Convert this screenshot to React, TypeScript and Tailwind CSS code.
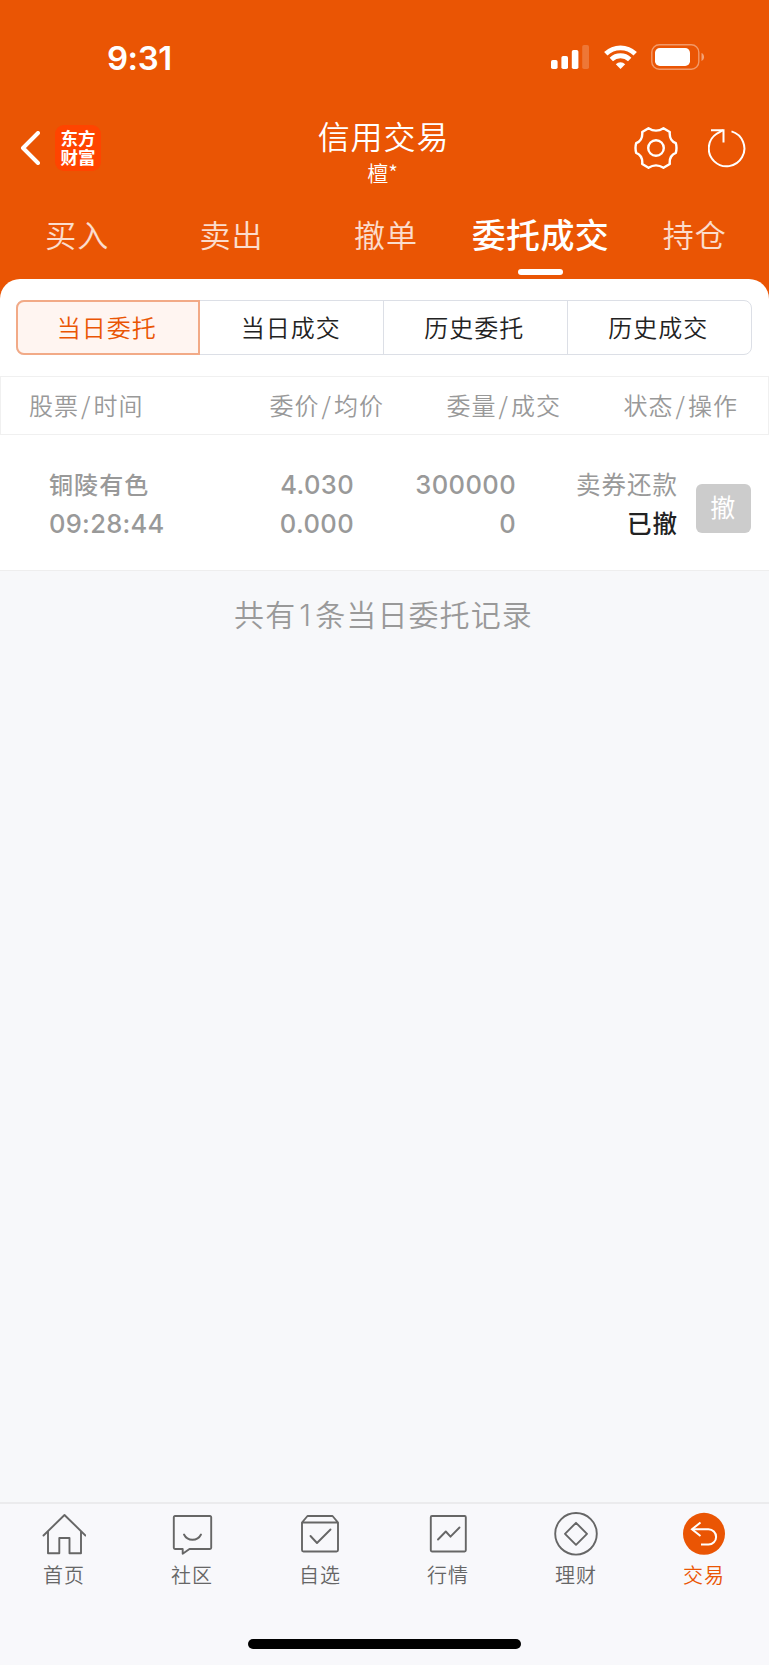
import { useState } from 'react'
import type { ReactNode } from 'react'
import clsx from 'clsx'

const TABS = ['买入', '卖出', '撤单', '委托成交', '持仓']
const SEGMENTS = ['当日委托', '当日成交', '历史委托', '历史成交']

const ORDERS = [
  {
    name: '铜陵有色',
    time: '09:28:44',
    price: '4.030',
    avgPrice: '0.000',
    amount: '300000',
    filled: '0',
    side: '卖券还款',
    status: '已撤',
  },
]

function StatusBar() {
  return (
    <div className="flex h-[114px] items-center justify-between pl-[107px] pr-[64px]">
      <span className="pt-[2px] font-['Inter','Liberation_Sans',sans-serif] text-[33px] font-semibold leading-none tracking-[-0.5px]">
        9:31
      </span>
      <div className="flex items-center gap-[14.5px]">
        <svg width="38" height="24" viewBox="0 0 38 24" fill="currentColor">
          <rect x="0" y="15" width="6.6" height="9" rx="1.8" />
          <rect x="10.4" y="11" width="6.6" height="13" rx="1.8" />
          <rect x="20.8" y="5" width="6.6" height="19" rx="1.8" />
          <rect x="31.2" y="0" width="6.8" height="24" rx="1.8" opacity="0.2" />
        </svg>
        <svg width="33" height="24" viewBox="0 0 33 24" fill="none" stroke="currentColor" strokeWidth="4.8">
          <path d="M1.8 8.8a21 21 0 0 1 29.4 0" />
          <path d="M7.3 14.5a13.2 13.2 0 0 1 18.4 0" />
          <path d="M16.5 24l-4.7-4.8a6.8 6.8 0 0 1 9.4 0z" fill="currentColor" stroke="none" />
        </svg>
        <svg width="54" height="26" viewBox="0 0 54 26" fill="currentColor">
          <rect x="0.8" y="0.8" width="47" height="24.4" rx="7.5" fill="none" stroke="currentColor" strokeWidth="1.4" opacity="0.4" />
          <rect x="4" y="4" width="35" height="18" rx="4.8" />
          <path d="M50.5 9v8c1.5-.6 2.6-2.2 2.6-4s-1.1-3.4-2.6-4z" opacity="0.45" />
        </svg>
      </div>
    </div>
  )
}

function TitleBar() {
  return (
    <div className="grid h-[82px] grid-cols-3 items-start">
      <div className="flex items-center gap-[15px] pl-5 pt-[11px]">
        <svg width="20" height="34" viewBox="0 0 20 34" fill="none" stroke="currentColor" strokeWidth="4" strokeLinecap="round" strokeLinejoin="round">
          <path d="M18 2L3 17l15 15" />
        </svg>
        <div className="h-[46px] w-[46px] rounded-[9px] bg-[#ff4400] pt-[3px] text-center text-[17.5px] font-bold leading-[19px]">
          东方
          <br />
          财富
        </div>
      </div>
      <div className="flex flex-col items-center pr-[2px]">
        <h1 className="text-[32px] font-[350] leading-[42px] tracking-[0.9px]">信用交易</h1>
        <span className="mt-px pr-[2px] text-[21px] font-[350] leading-[30px]">檀*</span>
      </div>
      <div className="flex items-center justify-end gap-[30px] pr-[22px] pt-3">
        <svg width="44" height="44" viewBox="0 0 44 44" fill="none" stroke="currentColor" strokeWidth="2.4" strokeLinejoin="round">
          <path d="M14.5 2.2Q22 7 29.5 2.2L35.8 6Q35 14.5 41.8 17.2Q43.2 22 41.8 26.8Q35 29.5 35.8 38L29.5 41.8Q22 37 14.5 41.8L8.2 38Q9 29.5 2.2 26.8Q0.8 22 2.2 17.2Q9 14.500 8.2 6Z" />
          <circle cx="22" cy="22" r="7.8" />
        </svg>
        <svg width="39" height="40" viewBox="0 0 39 40" fill="none" stroke="currentColor" strokeWidth="2">
          <path d="M23.5 3.4A17.8 17.8 0 1 1 9 5.5L15 2.2" />
          <path d="M3 2.2h12.5v12.3" />
        </svg>
      </div>
    </div>
  )
}

interface NavItemProps {
  label: string
  active?: boolean
  children: ReactNode
}

function NavItem({ label, active, children }: NavItemProps) {
  return (
    <button className={clsx('flex flex-1 flex-col items-center', active ? 'text-[#ea5504]' : 'text-[#666]')}>
      <svg width="44" height="44" viewBox="0 0 44 44" fill="none" stroke="currentColor" strokeWidth="1.9" strokeLinecap="round" strokeLinejoin="round">
        {children}
      </svg>
      <span className="mt-[5px] text-[20px] font-[350] leading-7 tracking-[1px]">{label}</span>
    </button>
  )
}

function BottomNav() {
  return (
    <nav className="flex h-[163px] flex-col border-t-2 border-[#ebebed] bg-[#f8f8fb]">
      <div className="flex pr-px pt-2">
        <NavItem label="首页">
          <path d="M1.5 23.5L22.5 3l21 20.5" />
          <path d="M6 20v21.3h11.3V26h10.2v15.3H39V20" />
        </NavItem>
        <NavItem label="社区">
          <path d="M5 4h35a1.2 1.2 0 0 1 1.2 1.2v30.6A1.2 1.2 0 0 1 40 37H19.5l-6.8 4.8V37H5a1.2 1.2 0 0 1-1.2-1.2V5.2A1.2 1.2 0 0 1 5 4z" />
          <path d="M14 22.5c3.5 7 13.5 7 17 0" />
        </NavItem>
        <NavItem label="自选">
          <path d="M4 10.5L9.5 4h25l5.5 6.5V38a1.5 1.5 0 0 1-1.5 1.5h-33A1.5 1.5 0 0 1 4 38zM4 10.5h36" />
          <path d="M12.5 24l6.5 7L32.5 17.5" />
        </NavItem>
        <NavItem label="行情">
          <rect x="4.800" y="4" width="35" height="35.5" rx="1.2" />
          <path d="M12 27.5l7.8-8 4.7 5.2 9-9.2" />
        </NavItem>
        <NavItem label="理财">
          <circle cx="22" cy="21.8" r="20.8" />
          <path d="M22 10.8l11 11-11 11-11-11z" />
        </NavItem>
        <NavItem label="交易" active>
          <circle cx="22" cy="21.8" r="21" fill="currentColor" stroke="none" />
          <g stroke="#fff" strokeWidth="2" strokeLinecap="butt" strokeLinejoin="miter">
            <path d="M18.5 10.5L10 17.3l8.500 6.7" />
            <path d="M10 17.3h16.5a7.6 7.6 0 0 1 0 15.2H19" />
          </g>
        </NavItem>
      </div>
      <div className="mx-auto mb-4 mt-auto h-[10px] w-[273px] rounded-full bg-black" />
    </nav>
  )
}

export default function App() {
  const [tab, setTab] = useState(3)
  const [segment, setSegment] = useState(0)

  return (
    <div className="flex h-[1665px] w-[769px] flex-col bg-[#f7f8fa] font-['Noto_Sans_CJK_SC',sans-serif]">
      <header className="overflow-hidden bg-[#ea5504] text-white">
        <StatusBar />
        <TitleBar />
        <div className="-mr-[3px] flex h-[83px]">
          {TABS.map((label, i) => (
            <button
              key={label}
              onClick={() => setTab(i)}
              className={clsx(
                'flex flex-1 basis-0 flex-col items-center whitespace-nowrap pt-[14px] leading-[48px]',
                tab === i ? 'text-[34px] font-medium tracking-[0.3px]' : 'text-[31px] font-[350] tracking-[1px] text-white/80'
              )}
            >
              {label}
              {tab === i && <span className="mt-[11px] h-[6px] w-[45px] rounded-full bg-white" />}
            </button>
          ))}
        </div>
      </header>

      {/* the orange strip behind shows through the rounded corners */}
      <div className="bg-linear-to-b from-[#ea5504] from-50% to-white to-50%">
        <div className="rounded-t-[20px] bg-white pb-[21px] pl-4 pr-[17px] pt-[21px]">
          <div className="grid h-[55px] grid-cols-4 rounded-lg border border-[#dcdfe6]">
            {SEGMENTS.map((label, i) => (
              <button
                key={label}
                onClick={() => setSegment(i)}
                className={clsx(
                  'pb-[2px] pr-[2px] text-[24px] font-[350] tracking-[1px]',
                  segment === i
                    ? '-my-px -ml-px mr-px rounded-l-lg border-2 border-[#f2aa87] bg-[#fff5f1] text-[#ea5504]'
                    : 'border-[#dcdfe6] text-[#222] not-last:border-r'
                )}
              >
                {label}
              </button>
            ))}
          </div>
        </div>
      </div>

      <div className="flex h-[59px] items-center whitespace-nowrap border border-[#f0f0f0] bg-white pb-px text-[24px] font-[350] tracking-[1px] text-[#999]">
        <span className="w-[143px] pl-7">股票<i className="px-[2px] not-italic">/</i>时间</span>
        <span className="w-[240px] text-right">委价<i className="px-[2px] not-italic">/</i>均价</span>
        <span className="w-[177px] text-right">委量<i className="px-[2px] not-italic">/</i>成交</span>
        <span className="w-[177px] text-right">状态<i className="px-[2px] not-italic">/</i>操作</span>
      </div>

      {ORDERS.map((o) => (
        <div
          key={o.time}
          className="flex h-[136px] border-b border-[#eee] bg-white pt-[30px] font-['Inter','Noto_Sans_CJK_SC',sans-serif] text-[25.5px] font-medium leading-[39px] tracking-[0.4px] text-[#999]"
        >
          <div className="w-[200px] pl-[49px]">
            <p className="translate-y-px text-[24px] tracking-[1.1px]">{o.name}</p>
            <p className="tracking-[0.3px]">{o.time}</p>
          </div>
          <div className="w-[154px] text-right">
            <p>{o.price}</p>
            <p>{o.avgPrice}</p>
          </div>
          <div className="w-[162px] text-right">
            <p>{o.amount}</p>
            <p>{o.filled}</p>
          </div>
          <div className="w-[162px] pt-px text-right text-[24.5px] tracking-[1px]">
            <p className="font-normal">{o.side}</p>
            <p className="text-[#222]">{o.status}</p>
          </div>
          <button className="ml-[18px] mt-[19px] h-[49px] w-[55px] rounded-[6px] bg-[#ccc] pr-px text-[25px] font-normal text-white">
            撤
          </button>
        </div>
      ))}

      <p className="flex-1 pr-[2px] pt-5 text-center text-[30px] font-[350] leading-[44px] tracking-[1.1px] text-[#999]">
        共有<span className="px-[3px] font-['Inter',sans-serif]">{ORDERS.length}</span>条当日委托记录
      </p>

      <BottomNav />
    </div>
  )
}
